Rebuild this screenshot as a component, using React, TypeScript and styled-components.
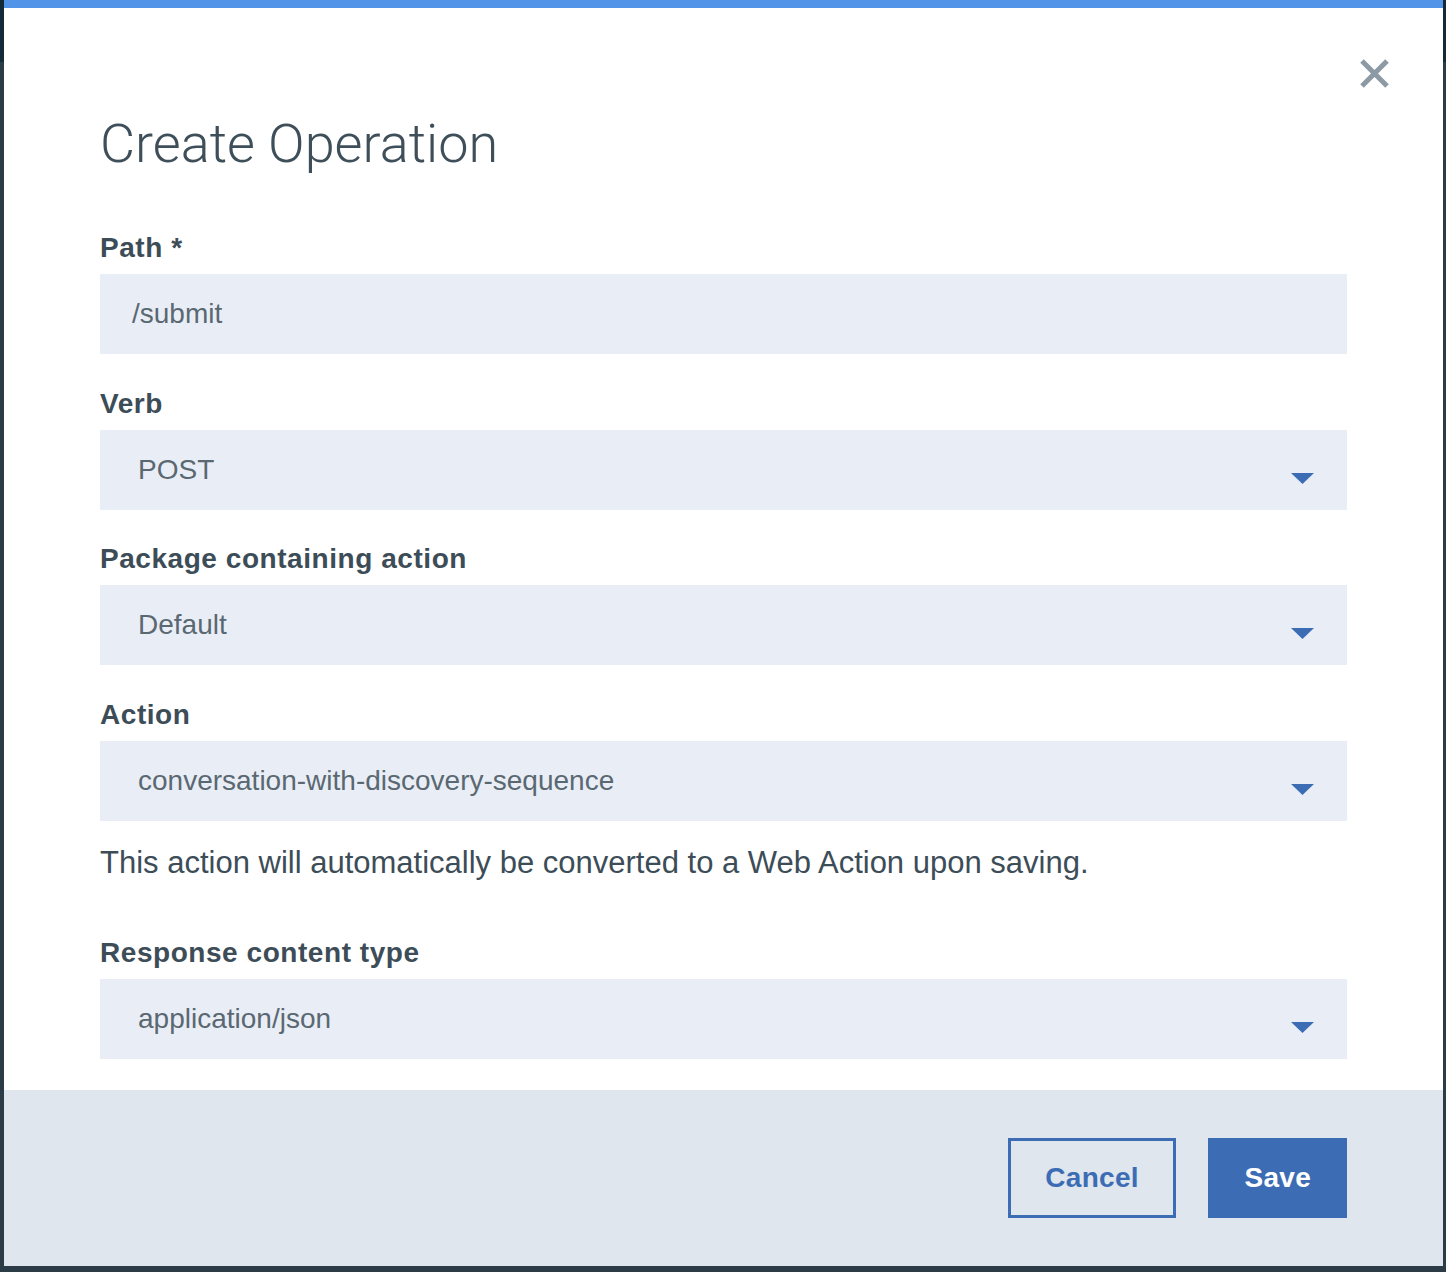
import React from 'react';
import styled, { createGlobalStyle } from 'styled-components';

const Global = createGlobalStyle`
  html, body { margin: 0; padding: 0; }
  body {
    background: #2b3c47;
    font-family: "Liberation Sans", Arial, sans-serif;
  }
  * { box-sizing: border-box; }
`;

const Backdrop = styled.div`
  min-height: 1272px;
  padding: 0 3px 6px 4px;
  background: linear-gradient(#142a39 0, #142a39 62px, #2b3c47 62px);
`;

const Modal = styled.div`
  position: relative;
  height: 1266px;
  background: #ffffff;
  border-top: 8px solid #5294e8;
  display: flex;
  flex-direction: column;
`;

const CloseButton = styled.button`
  position: absolute;
  top: 50px;
  right: 53px;
  width: 31px;
  height: 31px;
  padding: 0;
  border: 0;
  background: transparent;
  cursor: pointer;
  display: flex;
`;

const Body = styled.div`
  flex: 1;
  padding: 104px 96px 0 96px;
  display: flex;
  flex-direction: column;
`;

const Title = styled.h1`
  margin: 0 0 56px 0;
  font-family: Roboto, "Liberation Sans", sans-serif;
  font-weight: 300;
  font-size: 54px;
  line-height: 64px;
  color: #3e4f5a;
`;

const Field = styled.div<{ $gap?: number }>`
  display: flex;
  flex-direction: column;
  margin-bottom: ${(p) => (p.$gap ?? 33.5)}px;
`;

const Label = styled.label`
  font-weight: 700;
  font-size: 28px;
  line-height: 32px;
  letter-spacing: 0.55px;
  color: #3d4d58;
  margin-bottom: 10px;
`;

const TextInput = styled.input`
  height: 80px;
  width: 100%;
  border: 0;
  outline: none;
  background: #e9eef6;
  padding: 0 32px;
  font-family: "Liberation Sans", Arial, sans-serif;
  font-size: 28px;
  color: #5a6872;
`;

const SelectBox = styled.div`
  height: 80px;
  background: #e9eef6;
  padding: 0 33px 0 38px;
  display: flex;
  align-items: center;
  justify-content: space-between;
  cursor: pointer;
`;

const SelectValue = styled.span`
  font-size: 28px;
  line-height: 32px;
  color: #5a6872;
`;

const Caret = styled.svg`
  width: 23px;
  height: 11px;
  margin-top: 17px;
  flex: none;
`;

const Help = styled.p`
  margin: 24px 0 56px 0;
  font-size: 31px;
  line-height: 36px;
  color: #3d4d58;
`;

const Footer = styled.div`
  height: 176px;
  flex: none;
  background: #dfe6ed;
  padding: 48px 96px;
  display: flex;
  justify-content: flex-end;
  gap: 32px;
`;

const Button = styled.button<{ $primary?: boolean }>`
  height: 80px;
  padding: 0 ${(p) => (p.$primary ? 33 : 34.5)}px;
  border: 3px solid #3c6db4;
  background: ${(p) => (p.$primary ? '#3c6db4' : 'transparent')};
  color: ${(p) => (p.$primary ? '#ffffff' : '#3c6db4')};
  font-family: "Liberation Sans", Arial, sans-serif;
  font-weight: 700;
  font-size: 28px;
  letter-spacing: 0.3px;
  cursor: pointer;
`;

const Select: React.FC<{ value: string }> = ({ value }) => (
  <SelectBox>
    <SelectValue>{value}</SelectValue>
    <Caret viewBox="0 0 23 11">
      <polygon points="0,0 23,0 11.5,11" fill="#3c6db4" />
    </Caret>
  </SelectBox>
);

export default function App() {
  return (
    <>
      <Global />
      <Backdrop>
        <Modal>
          <CloseButton aria-label="Close">
            <svg width="31" height="31" viewBox="0 0 31 31">
              <path d="M3 3 L28 28 M28 3 L3 28" stroke="#8c9aa5" strokeWidth="5" fill="none" />
            </svg>
          </CloseButton>
          <Body>
            <Title>Create Operation</Title>
            <Field>
              <Label>Path *</Label>
              <TextInput value="/submit" readOnly />
            </Field>
            <Field>
              <Label>Verb</Label>
              <Select value="POST" />
            </Field>
            <Field>
              <Label>Package containing action</Label>
              <Select value="Default" />
            </Field>
            <Field $gap={0}>
              <Label>Action</Label>
              <Select value="conversation-with-discovery-sequence" />
            </Field>
            <Help>This action will automatically be converted to a Web Action upon saving.</Help>
            <Field $gap={0}>
              <Label>Response content type</Label>
              <Select value="application/json" />
            </Field>
          </Body>
          <Footer>
            <Button>Cancel</Button>
            <Button $primary>Save</Button>
          </Footer>
        </Modal>
      </Backdrop>
    </>
  );
}
